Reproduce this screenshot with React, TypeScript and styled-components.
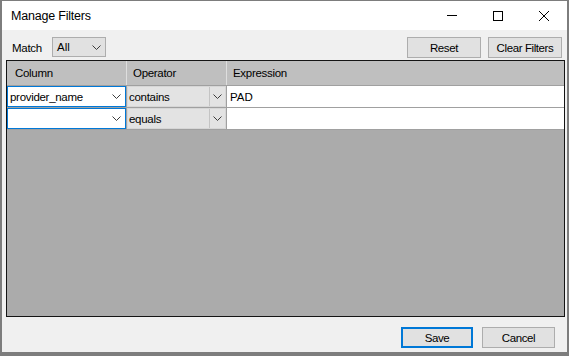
import React from 'react';
import styled, { createGlobalStyle } from 'styled-components';

const GlobalStyle = createGlobalStyle`
  html, body {
    margin: 0;
    padding: 0;
    background: #7d7d7d;
  }
  body {
    font-family: "Liberation Sans", Arial, sans-serif;
    font-size: 11.5px;
    color: #000;
  }
`;

const COLS = '119px 99px 1fr';

const Window = styled.div`
  box-sizing: border-box;
  width: 565px;
  height: 351px;
  margin: 1px 0 0 2px;
  background: #f0f0f0;
  display: flex;
  flex-direction: column;
`;

const TitleBar = styled.div`
  flex: none;
  height: 29px;
  background: #ffffff;
  display: flex;
  align-items: center;
`;

const Title = styled.div`
  flex: 1;
  padding-left: 9px;
  font-size: 12.5px;
  letter-spacing: -0.2px;
`;

const CaptionButton = styled.div`
  width: 46px;
  height: 29px;
  display: flex;
  align-items: center;
  justify-content: center;
`;

const Body = styled.div`
  flex: 1;
  display: flex;
  flex-direction: column;
  padding: 7px 2px 0 4px;
`;

const Toolbar = styled.div`
  height: 21px;
  display: flex;
  align-items: center;
  margin-bottom: 2px;
  padding-right: 3px;
`;

const MatchLabel = styled.div`
  box-sizing: border-box;
  width: 46px;
  padding-left: 6px;
  letter-spacing: -0.3px;
`;

const Combo = styled.div`
  box-sizing: border-box;
  width: 54px;
  height: 20px;
  border: 1px solid #adadad;
  background: #e1e1e1;
  display: flex;
  align-items: center;
  padding-left: 4px;
  margin-bottom: 1px;
`;

const ComboText = styled.span`
  flex: 1;
`;

const ArrowBox = styled.div<{ $w: number }>`
  width: ${p => p.$w}px;
  height: 100%;
  display: flex;
  align-items: center;
  justify-content: center;
`;

const Button = styled.div<{ $primary?: boolean; $w: number }>`
  box-sizing: border-box;
  width: ${p => p.$w}px;
  height: 21px;
  border: ${p => (p.$primary ? '2px solid #0078d7' : '1px solid #adadad')};
  background: #e1e1e1;
  display: flex;
  align-items: center;
  justify-content: center;
  letter-spacing: -0.4px;
`;

const ToolButtons = styled.div`
  margin-left: auto;
  display: flex;
  gap: 7px;
`;

const Grid = styled.div`
  box-sizing: border-box;
  width: 559px;
  height: 257px;
  border: 1px solid #141414;
  background: #ababab;
`;

const HeaderRow = styled.div`
  display: grid;
  grid-template-columns: ${COLS};
  column-gap: 1px;
  background: #dedede;
  border-bottom: 1px solid #a0a0a0;
`;

const HeaderCell = styled.div<{ $indent: number }>`
  height: 24px;
  line-height: 24px;
  background: #bfbfbf;
  padding-left: ${p => p.$indent}px;
  letter-spacing: -0.3px;
`;

const Rows = styled.div`
  display: grid;
  grid-template-columns: ${COLS};
  grid-auto-rows: 21px;
  gap: 1px;
  background: #a0a0a0;
  padding-bottom: 1px;
`;

const ColumnCell = styled.div`
  box-sizing: border-box;
  border: 1px solid #0078d7;
  background: #ffffff;
  display: flex;
  align-items: center;
  padding-left: 2px;
  letter-spacing: -0.3px;
`;

const OperatorCell = styled.div`
  box-sizing: border-box;
  background: #e3e3e3;
  border: 1px solid #d6d6d6;
  display: flex;
  align-items: center;
  padding-left: 1px;
  letter-spacing: -0.3px;
`;

const OperatorArrow = styled.div`
  width: 15px;
  height: 100%;
  border-left: 1px solid #c4c4c4;
  display: flex;
  align-items: center;
  justify-content: center;
`;

const ExpressionCell = styled.div`
  background: #ffffff;
  display: flex;
  align-items: center;
  padding-left: 3px;
`;

const CellText = styled.span`
  flex: 1;
`;

const Footer = styled.div`
  display: flex;
  justify-content: flex-end;
  gap: 9px;
  margin-top: 10px;
  padding-right: 10px;
`;

const Chevron = () => (
  <svg width="9" height="5" viewBox="0 0 9 5">
    <polyline points="0.5,0.5 4.5,4.5 8.5,0.5" fill="none" stroke="#3c3c3c" strokeWidth="1" />
  </svg>
);

const rows = [
  { column: 'provider_name', operator: 'contains', expression: 'PAD' },
  { column: '', operator: 'equals', expression: '' }
];

const App = () => {
  return (
    <>
      <GlobalStyle />
      <Window>
        <TitleBar>
          <Title>Manage Filters</Title>
          <CaptionButton>
            <svg width="10" height="10" viewBox="0 0 10 10">
              <line x1="0" y1="4.5" x2="10" y2="4.5" stroke="#000" strokeWidth="1" />
            </svg>
          </CaptionButton>
          <CaptionButton>
            <svg width="10" height="10" viewBox="0 0 10 10">
              <rect x="0.5" y="0.5" width="9" height="9" fill="none" stroke="#000" strokeWidth="1" />
            </svg>
          </CaptionButton>
          <CaptionButton>
            <svg width="10" height="10" viewBox="0 0 10 10">
              <line x1="0" y1="0" x2="10" y2="10" stroke="#000" strokeWidth="1" />
              <line x1="10" y1="0" x2="0" y2="10" stroke="#000" strokeWidth="1" />
            </svg>
          </CaptionButton>
        </TitleBar>
        <Body>
          <Toolbar>
            <MatchLabel>Match</MatchLabel>
            <Combo>
              <ComboText>All</ComboText>
              <ArrowBox $w={17}>
                <Chevron />
              </ArrowBox>
            </Combo>
            <ToolButtons>
              <Button $w={74}>Reset</Button>
              <Button $w={74}>Clear Filters</Button>
            </ToolButtons>
          </Toolbar>
          <Grid>
            <HeaderRow>
              <HeaderCell $indent={8}>Column</HeaderCell>
              <HeaderCell $indent={6}>Operator</HeaderCell>
              <HeaderCell $indent={6}>Expression</HeaderCell>
            </HeaderRow>
            <Rows>
              {rows.map((r, i) => (
                <React.Fragment key={i}>
                  <ColumnCell>
                    <CellText>{r.column}</CellText>
                    <ArrowBox $w={17}>
                      <Chevron />
                    </ArrowBox>
                  </ColumnCell>
                  <OperatorCell>
                    <CellText>{r.operator}</CellText>
                    <OperatorArrow>
                      <Chevron />
                    </OperatorArrow>
                  </OperatorCell>
                  <ExpressionCell>{r.expression}</ExpressionCell>
                </React.Fragment>
              ))}
            </Rows>
          </Grid>
          <Footer>
            <Button $primary $w={72}>Save</Button>
            <Button $w={73}>Cancel</Button>
          </Footer>
        </Body>
      </Window>
    </>
  );
};

export default App;
